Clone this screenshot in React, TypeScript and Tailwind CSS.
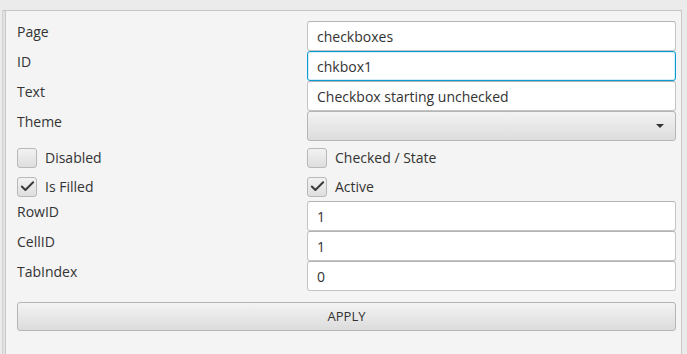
import { Check } from "lucide-react";

const font = { fontFamily: '"Open Sans", "Segoe UI", sans-serif' };

function Field({ value, focused }: { value: string; focused?: boolean }) {
  return (
    <div
      className={
        focused
          ? "flex h-[30px] items-center rounded-[3px] border border-[#0a9bd0] bg-white px-[9px] text-[14px] text-[#333] shadow-[inset_0_0_0_1px_#d7eef8]"
          : "flex h-[30px] items-center rounded-[3px] border border-[#c4c4c4] border-t-[#b4b4b4] bg-white px-[9px] text-[14px] text-[#333]"
      }
    >
      {value}
    </div>
  );
}

function Label({ text }: { text: string }) {
  return <div className="h-[30px] text-[14px] text-[#333]">{text}</div>;
}

function Box({ label, checked }: { label: string; checked?: boolean }) {
  return (
    <div className="flex h-[29px] items-center gap-[8px] text-[14px] text-[#333]">
      <div className="flex h-[20px] w-[20px] items-center justify-center rounded-[3px] border border-[#b8b8b8] bg-gradient-to-b from-[#f2f2f2] to-[#dedede]">
        {checked && <Check size={17} strokeWidth={2.8} className="text-[#3a3a3a]" />}
      </div>
      <span>{label}</span>
    </div>
  );
}

export default function App() {
  return (
    <div className="h-[354px] w-[687px] overflow-hidden bg-[#ebebeb] pt-[10px] pl-[2px]" style={font}>
      <div className="h-full w-[680px] border-t border-[#c6c6c6] border-l border-l-[#d2d2d2] bg-[#e2e2e2] pl-[2px]">
        <div className="h-full border-l border-r border-[#c8c8c8] bg-[#f4f4f4] pt-[10px] pl-[11px] pr-[3px]">
          <div className="grid grid-cols-[290px_369px]">
            <Label text="Page" />
            <Field value="checkboxes" />
            <Label text="ID" />
            <Field value="chkbox1" focused />
            <Label text="Text" />
            <Field value="Checkbox starting unchecked" />
            <Label text="Theme" />
            <div className="flex h-[30px] items-center justify-end rounded-[3px] border border-[#b5b5b5] bg-gradient-to-b from-[#f3f3f3] to-[#dcdcdc] pr-[11px]">
              <div className="h-0 w-0 border-x-[4px] border-t-[4px] border-x-transparent border-t-[#333]" />
            </div>
            <div className="pt-[2px]">
              <Box label="Disabled" />
            </div>
            <div className="pt-[2px]">
              <Box label="Checked / State" />
            </div>
            <Box label="Is Filled" checked />
            <Box label="Active" checked />
            <Label text="RowID" />
            <Field value="1" />
            <Label text="CellID" />
            <Field value="1" />
            <Label text="TabIndex" />
            <Field value="0" />
          </div>
          <button className="mt-[11px] flex h-[29px] w-[659px] items-center justify-center rounded-[3px] border border-[#b5b5b5] bg-gradient-to-b from-[#f3f3f3] to-[#dcdcdc] text-[13px] text-[#333]">
            APPLY
          </button>
        </div>
      </div>
    </div>
  );
}
